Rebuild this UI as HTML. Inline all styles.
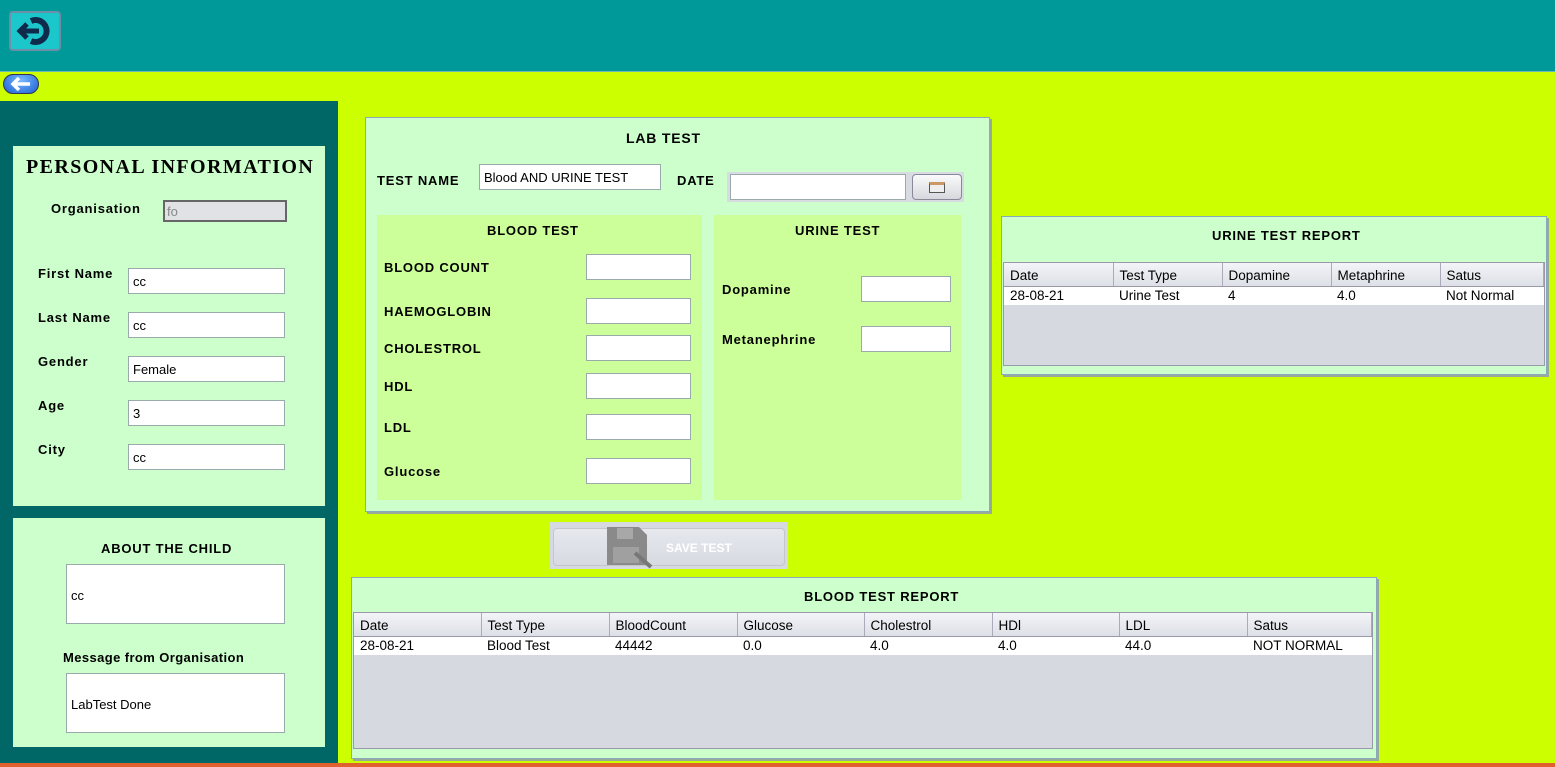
<!DOCTYPE html>
<html><head><meta charset="utf-8"><style>
*{box-sizing:border-box;margin:0;padding:0}
body{width:1555px;height:767px;overflow:hidden;background:#ccff00;font-family:"Liberation Sans",Arial,sans-serif;font-size:13px;color:#000;position:relative}
.a{position:absolute}
.b{font-weight:bold;letter-spacing:0.8px}
.inp{position:absolute;background:#fff;border:1px solid #9aa;font-size:13px;padding:6px 4px 2px;line-height:14px}
.panel{position:absolute;background:#ccffcc;border:1px solid #8ab;box-shadow:2px 2px 0 #9a9}
table{border-collapse:collapse;width:100%;font-size:13.5px}
th{font-weight:normal;text-align:left;background:linear-gradient(#f4f4f8,#dde0e6);border-right:1px solid #aab;border-bottom:1px solid #99a;padding:3px 6px 1px;height:23px}
td{background:#fff;padding:1px 6px;height:19px}
.tbl{position:absolute;background:#d6d9e0;border:1px solid #99a}
</style></head><body>
<div class="a" style="left:0;top:0;width:1555px;height:72px;background:#009999;border-bottom:1px solid #6bb"></div>
<div class="a" style="left:9px;top:11px;width:52px;height:40px;background:#1cc7cc;border:2px solid #6c8fa8;border-radius:4px">
<svg width="48" height="36" viewBox="0 0 48 36"><path d="M20 8 A11 11 0 1 1 20 28" fill="none" stroke="#0f2a4a" stroke-width="6"/><path d="M10 18 H28" stroke="#0f2a4a" stroke-width="5"/><path d="M16 11 L9 18 L16 25" fill="none" stroke="#0f2a4a" stroke-width="5"/></svg></div>
<div class="a" style="left:3px;top:74px;width:36px;height:20px;border-radius:10px;background:radial-gradient(ellipse at 50% 30%,#7ab8ff,#1a5fd0);border:1px solid #335">
<svg width="34" height="18"><path d="M9 9 H26 M15 3 L9 9 L15 15" stroke="#fff" stroke-width="3.5" fill="none"/></svg></div>
<div class="a" style="left:0;top:101px;width:338px;height:662px;background:#006666"></div>
<div class="a" style="left:0;top:763px;width:1555px;height:4px;background:#e06030"></div>

<div class="a" style="left:13px;top:146px;width:312px;height:360px;background:#ccffcc"></div>
<div class="a" style="left:26px;top:156px;font-weight:bold;font-family:'Liberation Serif',serif;font-size:20px;letter-spacing:1.4px">PERSONAL INFORMATION</div>
<div class="a b" style="left:51px;top:201px">Organisation</div>
<div class="inp" style="left:163px;top:200px;width:124px;height:22px;background:#e0e2e6;border:2px solid #666;color:#888;padding:3px 2px">fo</div>
<div class="a b" style="left:38px;top:266px">First Name</div><div class="inp" style="left:128px;top:268px;width:157px;height:26px">cc</div>
<div class="a b" style="left:38px;top:310px">Last Name</div><div class="inp" style="left:128px;top:312px;width:157px;height:26px">cc</div>
<div class="a b" style="left:38px;top:354px">Gender</div><div class="inp" style="left:128px;top:356px;width:157px;height:26px">Female</div>
<div class="a b" style="left:38px;top:398px">Age</div><div class="inp" style="left:128px;top:400px;width:157px;height:26px">3</div>
<div class="a b" style="left:38px;top:442px">City</div><div class="inp" style="left:128px;top:444px;width:157px;height:26px">cc</div>

<div class="a" style="left:13px;top:518px;width:312px;height:229px;background:#ccffcc"></div>
<div class="a b" style="left:101px;top:541px">ABOUT THE CHILD</div>
<div class="inp" style="left:66px;top:564px;width:219px;height:60px;padding-top:24px">cc</div>
<div class="a b" style="left:63px;top:650px;letter-spacing:0.4px">Message from Organisation</div>
<div class="inp" style="left:66px;top:673px;width:219px;height:60px;padding-top:24px">LabTest Done</div>

<div class="panel" style="left:365px;top:117px;width:625px;height:395px"></div>
<div class="a b" style="left:626px;top:130px;font-size:14px">LAB TEST</div>
<div class="a b" style="left:377px;top:173px">TEST NAME</div>
<div class="inp" style="left:479px;top:164px;width:182px;height:26px">Blood AND URINE TEST</div>
<div class="a b" style="left:677px;top:173px">DATE</div>
<div class="a" style="left:727px;top:172px;width:237px;height:30px;background:#d8dbe2"></div>
<div class="inp" style="left:730px;top:174px;width:176px;height:26px"></div>
<div class="a" style="left:912px;top:174px;width:50px;height:26px;background:linear-gradient(#fafafa,#d6d8de);border:1px solid #889;border-radius:4px"><div style="margin:7px auto;width:16px;height:11px;border:1px solid #555;background:#eee;border-top:3px solid #c96"></div></div>
<div class="a" style="left:377px;top:215px;width:325px;height:285px;background:#ccff99"></div>
<div class="a b" style="left:487px;top:223px">BLOOD TEST</div>
<div class="a b" style="left:384px;top:260px">BLOOD COUNT</div><div class="inp" style="left:586px;top:254px;width:105px;height:26px"></div>
<div class="a b" style="left:384px;top:304px">HAEMOGLOBIN</div><div class="inp" style="left:586px;top:298px;width:105px;height:26px"></div>
<div class="a b" style="left:384px;top:341px">CHOLESTROL</div><div class="inp" style="left:586px;top:335px;width:105px;height:26px"></div>
<div class="a b" style="left:384px;top:379px">HDL</div><div class="inp" style="left:586px;top:373px;width:105px;height:26px"></div>
<div class="a b" style="left:384px;top:420px">LDL</div><div class="inp" style="left:586px;top:414px;width:105px;height:26px"></div>
<div class="a b" style="left:384px;top:464px">Glucose</div><div class="inp" style="left:586px;top:458px;width:105px;height:26px"></div>
<div class="a" style="left:714px;top:215px;width:247px;height:285px;background:#ccff99"></div>
<div class="a b" style="left:795px;top:223px">URINE TEST</div>
<div class="a b" style="left:722px;top:282px">Dopamine</div><div class="inp" style="left:861px;top:276px;width:90px;height:26px"></div>
<div class="a b" style="left:722px;top:332px">Metanephrine</div><div class="inp" style="left:861px;top:326px;width:90px;height:26px"></div>

<div class="a" style="left:550px;top:522px;width:238px;height:47px;background:#d6d9e0"></div>
<div class="a" style="left:553px;top:528px;width:232px;height:38px;background:linear-gradient(#e6e8ee,#d8dae2);border:1px solid #c4c6cc;border-radius:4px"></div>
<svg class="a" style="left:605px;top:525px" width="52" height="44"><path d="M2 2 H34 L42 10 V40 H2 Z" fill="#8a8a8a"/><rect x="12" y="3" width="16" height="11" fill="#a8a8a8"/><rect x="8" y="22" width="26" height="16" fill="#a0a0a0"/><path d="M30 28 L46 42" stroke="#777" stroke-width="4"/></svg>
<div class="a b" style="left:666px;top:541px;color:#fff;font-size:12px;letter-spacing:0">SAVE TEST</div>

<div class="panel" style="left:1001px;top:216px;width:546px;height:159px"></div>
<div class="a b" style="left:1212px;top:228px">URINE TEST REPORT</div>
<div class="tbl" style="left:1003px;top:262px;width:542px;height:104px"><table><tr><th style="width:109px">Date</th><th style="width:109px">Test Type</th><th style="width:109px">Dopamine</th><th style="width:109px">Metaphrine</th><th>Satus</th></tr><tr><td>28-08-21</td><td>Urine Test</td><td>4</td><td>4.0</td><td>Not Normal</td></tr></table></div>

<div class="panel" style="left:351px;top:577px;width:1026px;height:182px"></div>
<div class="a b" style="left:804px;top:589px">BLOOD TEST REPORT</div>
<div class="tbl" style="left:353px;top:612px;width:1020px;height:137px"><table><tr><th style="width:127px">Date</th><th style="width:128px">Test Type</th><th style="width:128px">BloodCount</th><th style="width:127px">Glucose</th><th style="width:128px">Cholestrol</th><th style="width:127px">HDl</th><th style="width:128px">LDL</th><th>Satus</th></tr><tr><td>28-08-21</td><td>Blood Test</td><td>44442</td><td>0.0</td><td>4.0</td><td>4.0</td><td>44.0</td><td>NOT NORMAL</td></tr></table></div>
</body></html>
